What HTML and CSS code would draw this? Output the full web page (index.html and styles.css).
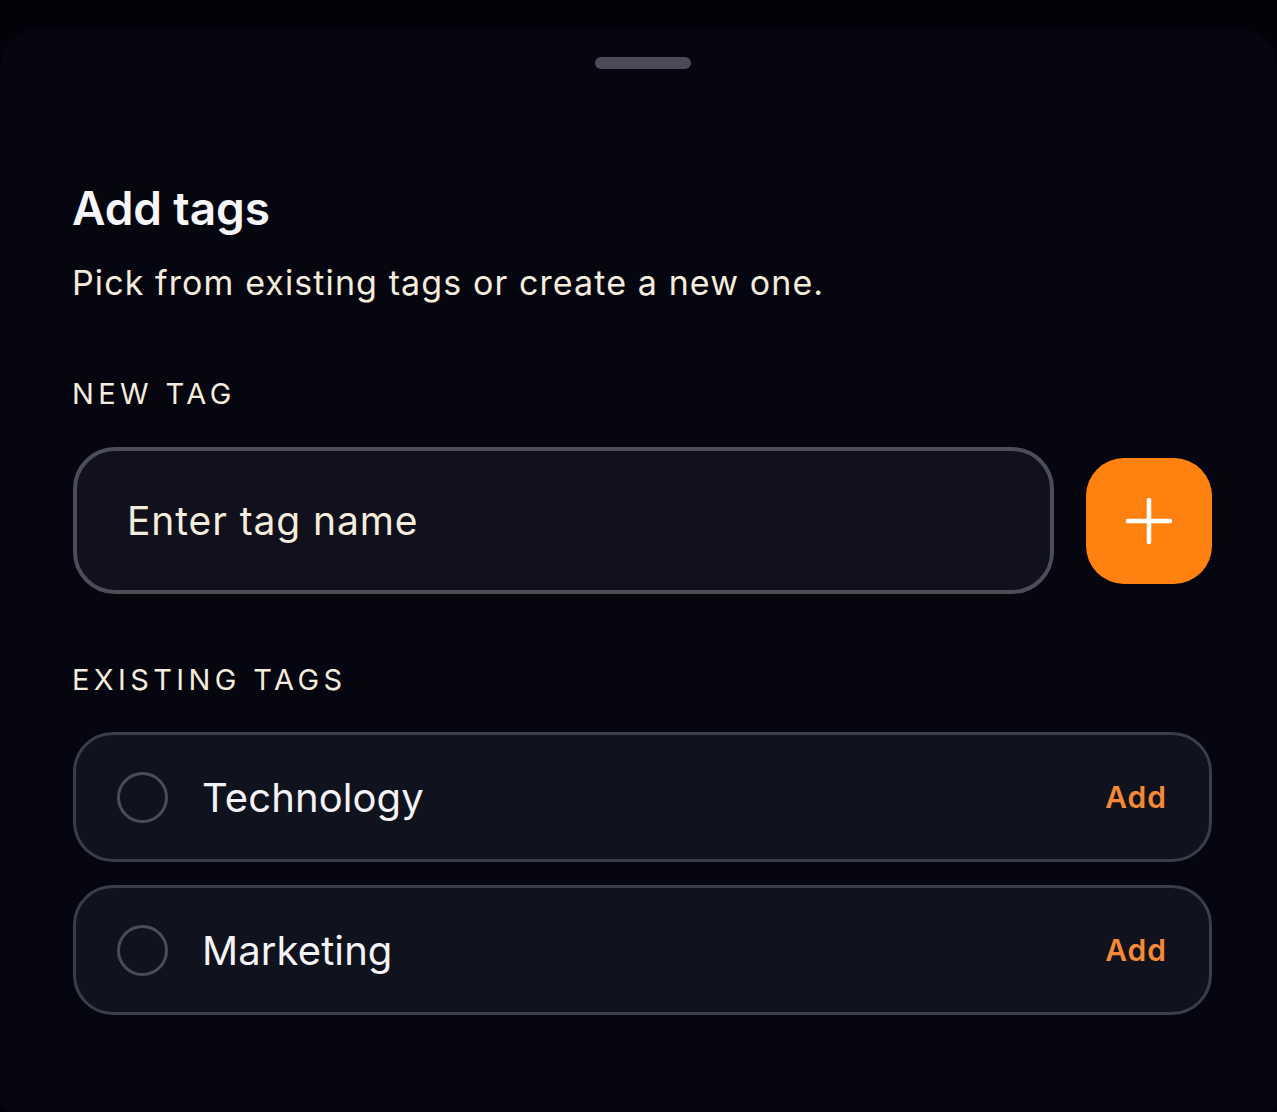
FILE: index.html
```html
<!DOCTYPE html>
<html lang="en">
<head>
<meta charset="utf-8">
<title>Add tags</title>
<link rel="stylesheet" href="styles.css">
</head>
<body>
<div class="sheet">
  <div class="handle"></div>
  <h1 class="title">Add tags</h1>
  <p class="subtitle">Pick from existing tags or create a new one.</p>

  <div class="label label-new">NEW TAG</div>
  <div class="new-row">
    <div class="input"><span class="placeholder">Enter tag name</span></div>
    <button class="plus" aria-label="Add tag">
      <svg width="46" height="46" viewBox="0 0 46 46"><path d="M23 2v42M2 23h42" stroke="#fff" stroke-width="4.5" stroke-linecap="round" fill="none"/></svg>
    </button>
  </div>

  <div class="label label-existing">EXISTING TAGS</div>
  <div class="list">
    <div class="tag-row">
      <span class="radio"></span>
      <span class="tag-name">Technology</span>
      <span class="add">Add</span>
    </div>
    <div class="tag-row">
      <span class="radio"></span>
      <span class="tag-name">Marketing</span>
      <span class="add">Add</span>
    </div>
  </div>
</div>
</body>
</html>
```

FILE: styles.css
```css
html, body {
  margin: 0;
  padding: 0;
  background: #020208;
  font-family: Inter, "Noto Sans", "Liberation Sans", sans-serif;
}

.sheet {
  margin-top: 28px;
  min-height: 1084px;
  box-sizing: border-box;
  background: #05060f;
  border-radius: 40px 40px 12px 12px;
  padding: 29px 65px 0 73px;
}

.handle {
  width: 96px;
  height: 12px;
  border-radius: 6px;
  background: #4a4b57;
  margin: 0 auto;
}

.title {
  margin: 111px 0 0 -1px;
  font-size: 46px;
  line-height: 56px;
  font-weight: 600;
  color: #f6f6f8;
  letter-spacing: -0.1px;
}

.subtitle {
  margin: 25px 0 0 -1px;
  font-size: 34px;
  line-height: 44px;
  font-weight: 400;
  color: #f4ecdc;
  letter-spacing: 1.1px;
}

.label {
  margin-left: -1px;
  font-size: 29px;
  line-height: 36px;
  letter-spacing: 4.4px;
  color: #f4ecdc;
  font-weight: 400;
}

.label-new { margin-top: 71px; }
.label-existing { margin-top: 68px; }

.new-row {
  margin-top: 35px;
  display: flex;
  align-items: center;
  gap: 32px;
}

.input {
  flex: 1;
  height: 147px;
  box-sizing: border-box;
  border: 4px solid #4c4d59;
  border-radius: 42px;
  background: #10111c;
  display: flex;
  align-items: center;
  padding-left: 50px;
}

.placeholder {
  font-size: 39px;
  color: #f4ecdc;
  letter-spacing: 0.9px;
}

.plus {
  width: 126px;
  height: 126px;
  border: none;
  border-radius: 38px;
  background: #ff8210;
  display: flex;
  align-items: center;
  justify-content: center;
  padding: 0;
}

.list {
  margin-top: 34px;
  display: flex;
  flex-direction: column;
  gap: 23px;
}

.tag-row {
  height: 130px;
  box-sizing: border-box;
  border: 3px solid #3c3d4a;
  border-radius: 40px;
  background: #10121d;
  display: flex;
  align-items: center;
  padding: 0 42px 0 41px;
}

.radio {
  width: 51px;
  height: 51px;
  box-sizing: border-box;
  border: 3px solid #4b4c58;
  border-radius: 50%;
  flex: none;
}

.tag-name {
  margin-left: 34px;
  font-size: 40px;
  color: #f3f3f6;
  flex: 1;
  letter-spacing: 0.1px;
}

.add {
  font-size: 30px;
  font-weight: 600;
  color: #f58a36;
  letter-spacing: 1px;
}
```
